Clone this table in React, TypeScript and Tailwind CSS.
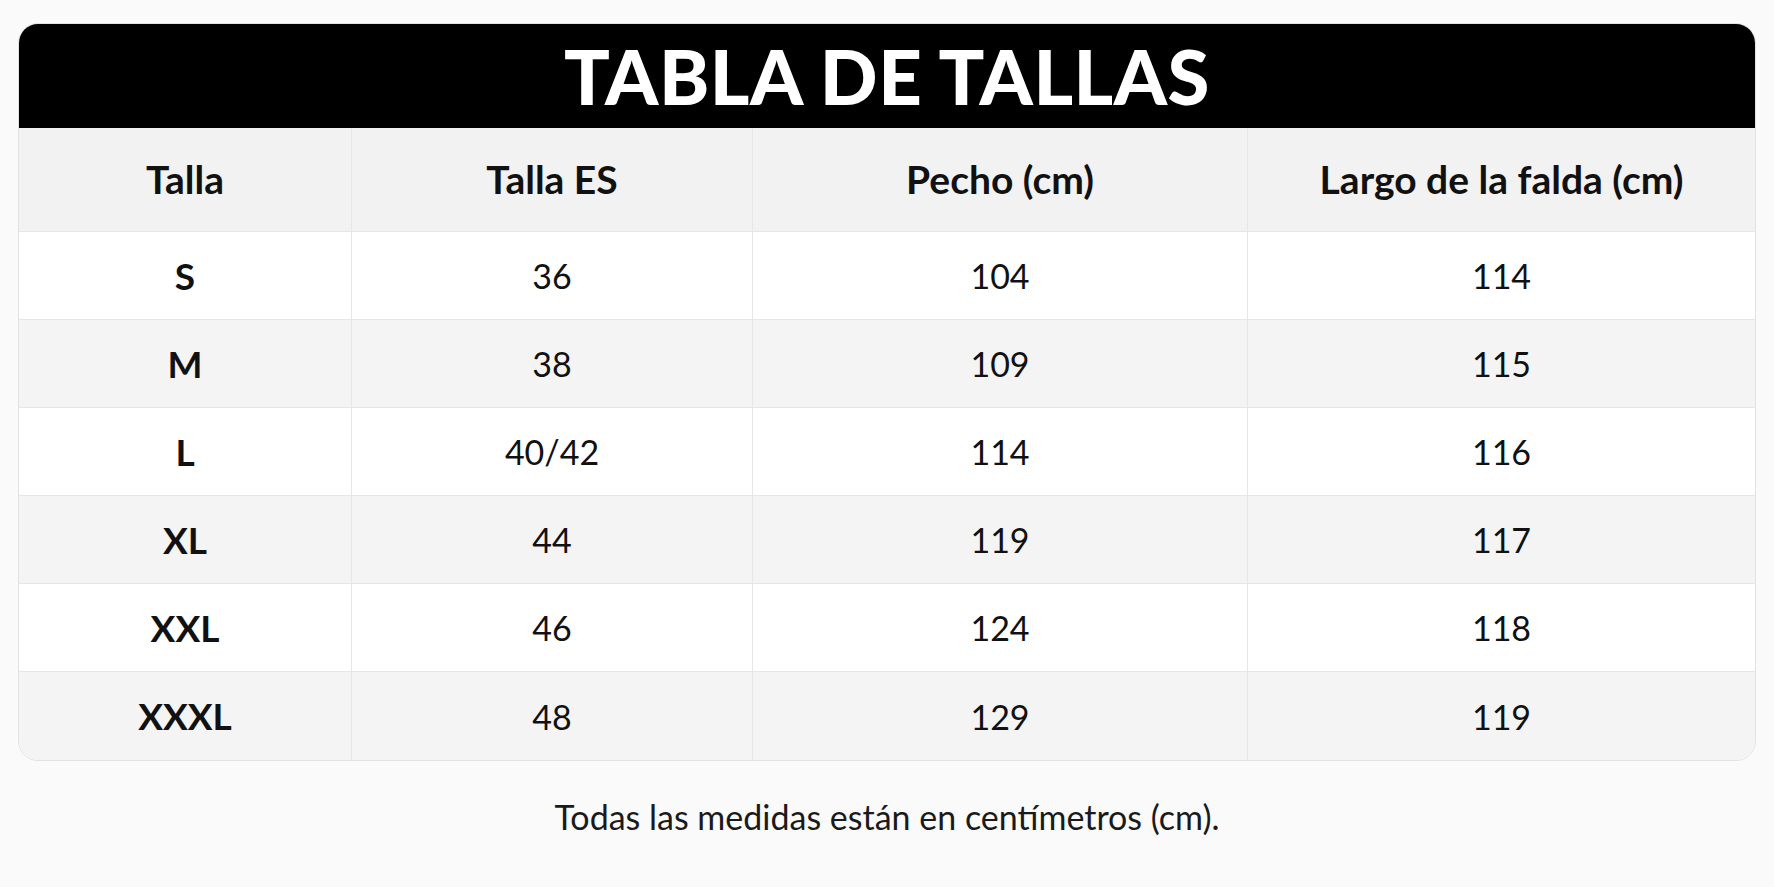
const rows = [
  ["S", "36", "104", "114"],
  ["M", "38", "109", "115"],
  ["L", "40/42", "114", "116"],
  ["XL", "44", "119", "117"],
  ["XXL", "46", "124", "118"],
  ["XXXL", "48", "129", "119"],
];

const headers = ["Talla", "Talla ES", "Pecho (cm)", "Largo de la falda (cm)"];

export default function App() {
  return (
    <div className="min-h-[887px] w-full bg-[#fafafa] pt-[23px] font-['Lato',sans-serif] text-[#111]">
      <div className="mx-[18px] overflow-hidden rounded-[20px] border border-[#e2e2e2] bg-white">
        <div className="flex h-[104px] items-center justify-center bg-black">
          <h1 className="text-[76px] font-black leading-none tracking-[0.5px] text-white">
            TABLA DE TALLAS
          </h1>
        </div>
        <div className="grid grid-cols-[332px_401px_495px_1fr]">
          {headers.map((h, i) => (
            <div
              key={h}
              className={`flex h-[104px] items-center justify-center border-b border-[#e6e6e6] bg-[#f2f2f2] text-[39px] font-bold ${
                i > 0 ? "border-l" : ""
              }`}
            >
              {h}
            </div>
          ))}
          {rows.map((r, ri) =>
            r.map((c, ci) => (
              <div
                key={`${ri}-${ci}`}
                className={`flex h-[88px] items-center justify-center ${
                  ri % 2 ? "bg-[#f4f4f4]" : "bg-white"
                } ${ci > 0 ? "border-l border-[#e6e6e6]" : ""} ${
                  ri < rows.length - 1 ? "border-b border-[#e6e6e6]" : ""
                } ${ci === 0 ? "text-[37px] font-bold" : "text-[34px] font-normal"}`}
              >
                {c}
              </div>
            ))
          )}
        </div>
      </div>
      <p className="mt-[30px] text-center text-[34px] text-[#1a1a1a]">
        Todas las medidas están en centímetros (cm).
      </p>
    </div>
  );
}
